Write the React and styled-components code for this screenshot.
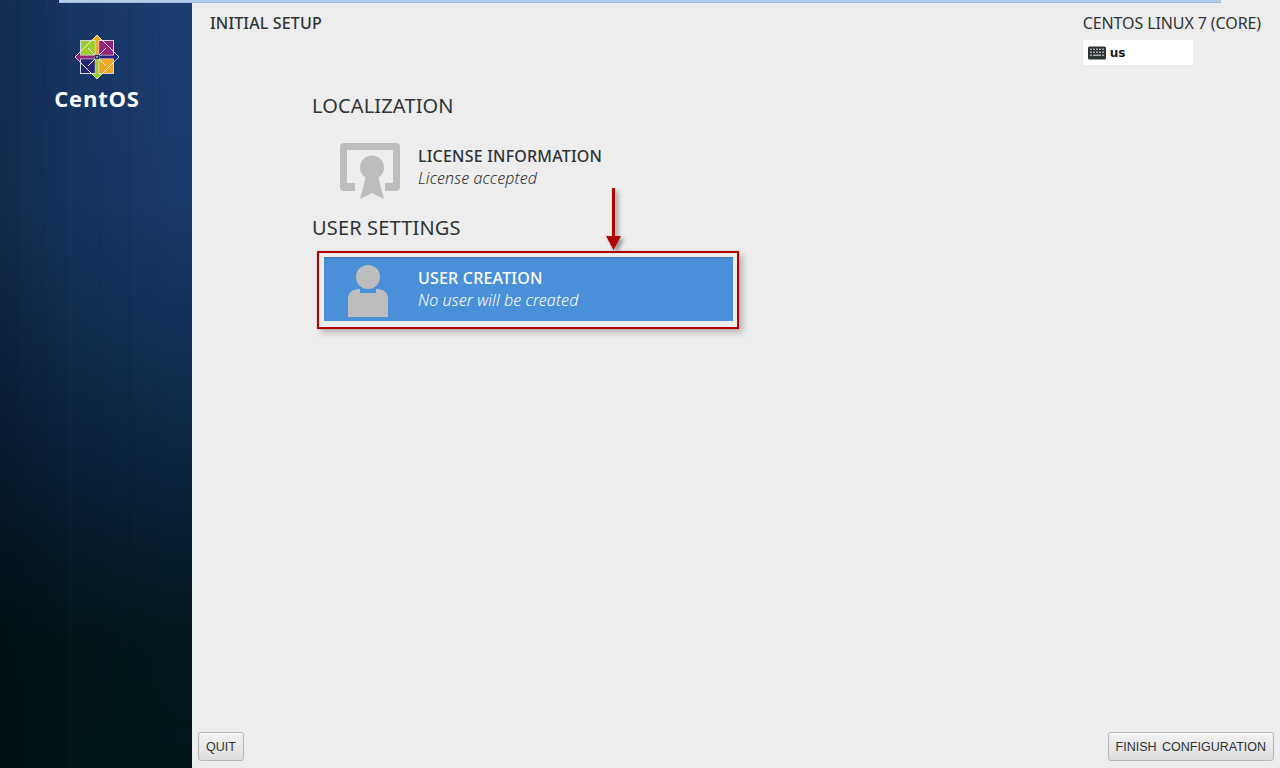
import React from 'react';
import styled, { createGlobalStyle } from 'styled-components';

const Global = createGlobalStyle`
  html, body { margin: 0; padding: 0; height: 100%; background: #ededed; }
  #root { height: 100%; }
  * { box-sizing: border-box; }
`;

const Page = styled.div`
  position: relative;
  display: flex;
  width: 1280px;
  height: 768px;
  overflow: hidden;
  font-family: "Noto Sans", "Open Sans", sans-serif;
  color: #2e3436;
`;

const TopStripe = styled.div`
  position: absolute;
  top: 0;
  left: 59px;
  width: 1162px;
  height: 3px;
  background: #b5cdea;
  border-bottom: 1px solid #9db8da;
`;

const Sidebar = styled.aside`
  flex: 0 0 192px;
  display: flex;
  flex-direction: column;
  align-items: center;
  padding: 34px 0 0 2px;
  background:
    linear-gradient(90deg,
      rgba(0, 0, 0, 0) 0 14px, rgba(0, 0, 0, 0.05) 15px 17px, rgba(0, 0, 0, 0) 18px 41px,
      rgba(0, 0, 0, 0.05) 42px 44px, rgba(0, 0, 0, 0) 45px 68px, rgba(255, 255, 255, 0.012) 69px 72px,
      rgba(0, 0, 0, 0) 73px 98px, rgba(0, 0, 0, 0.05) 99px 100px, rgba(0, 0, 0, 0) 101px 127px,
      rgba(0, 0, 0, 0.04) 128px 131px, rgba(0, 0, 0, 0) 132px 158px, rgba(0, 0, 0, 0.05) 159px 160px,
      rgba(0, 0, 0, 0) 161px),
    linear-gradient(90deg, rgba(0, 0, 0, 0.3), rgba(0, 0, 0, 0.12) 40%, rgba(0, 0, 0, 0) 90%),
    linear-gradient(180deg, #1a3d72 0%, #193a6c 26%, #123058 42%, #0c2542 58%, #071c2c 72%, #03171c 84%, #02171a 100%);
`;

const LogoText = styled.div`
  margin-top: 4px;
  font-family: "Open Sans", sans-serif;
  font-size: 22px;
  font-weight: 700;
  line-height: 28px;
  letter-spacing: 0.8px;
  color: #ffffff;
`;

const Main = styled.main`
  flex: 1;
  display: flex;
  flex-direction: column;
  min-width: 0;
`;

const Header = styled.header`
  display: flex;
  justify-content: space-between;
  align-items: flex-start;
  height: 93px;
  padding: 13px 19px 0 18px;
`;

const Title = styled.h1`
  margin: 0;
  font-size: 16px;
  font-weight: 500;
  line-height: 20px;
  letter-spacing: 0.15px;
`;

const Product = styled.div`
  display: flex;
  flex-direction: column;
  align-items: flex-start;
  gap: 7px;
`;

const ProductName = styled.div`
  font-size: 16px;
  line-height: 20px;
  letter-spacing: -0.1px;
`;

const Layout = styled.div`
  display: flex;
  align-items: center;
  gap: 4px;
  width: 110px;
  height: 25px;
  padding-left: 5px;
  background: #ffffff;
  font-family: "DejaVu Sans", sans-serif;
  font-size: 12px;
  font-weight: 700;
  color: #1a1a1a;
`;

const Content = styled.div`
  flex: 1;
  padding-left: 120px;
`;

const Section = styled.h2`
  margin: 0;
  font-size: 20px;
  font-weight: 400;
  line-height: 26px;
  letter-spacing: 0.15px;
`;

const Spoke = styled.div`
  display: flex;
  align-items: center;
  width: ${p => (p.$selected ? '409px' : '421px')};
  height: 64px;
  padding-left: ${p => (p.$selected ? '24px' : '28px')};
  background: ${p => (p.$selected ? '#4a90d9' : 'transparent')};
  color: ${p => (p.$selected ? '#ffffff' : 'inherit')};
  box-shadow: ${p => (p.$selected ? 'inset 0 2px 2px -1px rgba(60, 90, 130, 0.55)' : 'none')};
`;

const LicenseRow = styled(Spoke)`
  margin: 16px 0;
`;

const IconSlot = styled.div`
  flex: 0 0 ${p => p.$w}px;
  display: flex;
  margin-top: ${p => p.$drop}px;
`;

const SpokeText = styled.div`
  display: flex;
  flex-direction: column;
`;

const SpokeName = styled.div`
  font-size: 16px;
  font-weight: 500;
  line-height: 22px;
  letter-spacing: 0.2px;
`;

const SpokeStatus = styled.div`
  font-size: 16px;
  font-style: italic;
  font-weight: 300;
  line-height: 22px;
  letter-spacing: 0.1px;
`;

const Highlight = styled.div`
  position: relative;
  width: 422px;
  height: 78px;
  margin: 10px 0 0 5px;
  padding: 4px 0 0 5px;
  border: 2px solid #b00000;
  box-shadow: 4px 4px 6px rgba(0, 0, 0, 0.22), 0 0 2px rgba(190, 0, 0, 0.2);
`;

const ArrowMark = styled.svg`
  position: absolute;
  left: 286px;
  top: -65px;
`;

const Footer = styled.footer`
  display: flex;
  justify-content: space-between;
  align-items: flex-end;
  padding: 0 6px 7px;
`;

const Button = styled.button`
  height: 29px;
  padding: 0 7px;
  font-family: "Liberation Sans", "DejaVu Sans", sans-serif;
  font-size: 12.5px;
  word-spacing: ${p => (p.$wide ? '2px' : '0')};
  color: #2e3436;
  background: linear-gradient(180deg, #f2f2f2, #dedede);
  border: 1px solid #b4b4b4;
  border-radius: 3px;
  box-shadow: inset 0 1px 0 #ffffff;
`;

const CentLogo = () => {
  const arrow = '23,1 28.5,6.5 24.8,6.5 24.8,21 21.2,21 21.2,6.5 17.5,6.5';
  return (
    <svg width="46" height="46" viewBox="0 0 46 46" aria-hidden="true">
      <rect x="6" y="6" width="34" height="34" fill="#cfd5dc" />
      <rect x="7" y="7" width="15" height="15" fill="#9ccd2a" />
      <rect x="24" y="7" width="15" height="15" fill="#932279" />
      <rect x="7" y="24" width="15" height="15" fill="#262577" />
      <rect x="24" y="24" width="15" height="15" fill="#efa724" />
      <g fill="none" stroke="#eef1f4" strokeWidth="1">
        <path d="M23 1 L45 23 L23 45 L1 23 Z" />
        <path d="M14 14 L21 21 M32 14 L25 21 M14 32 L21 25 M32 32 L25 25" />
      </g>
      <g stroke="#eef1f4" strokeWidth="0.6">
        <polygon points={arrow} fill="#efa724" />
        <polygon points={arrow} fill="#262577" transform="rotate(90 23 23)" />
        <polygon points={arrow} fill="#9ccd2a" transform="rotate(180 23 23)" />
        <polygon points={arrow} fill="#932279" transform="rotate(270 23 23)" />
      </g>
      <rect x="20.8" y="20.8" width="4.4" height="4.4" fill="#14305a" />
      <rect x="22.2" y="22.2" width="1.6" height="1.6" fill="#cfd5dc" />
    </svg>
  );
};

const KeyboardIcon = () => (
  <svg width="18" height="14" viewBox="0 0 18 14" aria-hidden="true">
    <rect x="0" y="0.5" width="18" height="13" rx="1.5" fill="#2e3436" />
    <g fill="#a8a8a8">
      <path d="M2 2.5h2v1.5H2zM5 2.5h2v1.5H5zM8 2.5h2v1.5H8zM11 2.5h2v1.5h-2zM14 2.5h2v1.5h-2z" />
      <path d="M2 5.5h2v1.5H2zM5 5.5h2v1.5H5zM8 5.5h2v1.5H8zM11 5.5h2v1.5h-2zM14 5.5h2v1.5h-2z" />
      <path d="M2 8.5h2v1.5H2zM14 8.5h2v1.5h-2zM5 8.5h8v1.5H5z" />
    </g>
  </svg>
);

const LicenseIcon = () => (
  <svg width="60" height="56" viewBox="0 0 60 56" aria-hidden="true">
    <path
      fill="#bdbdbd"
      d="M4 0 H56 a4 4 0 0 1 4 4 V44 a4 4 0 0 1 -4 4 H45 V40 H53 V7 H7 V40 H15 V48 H4 a4 4 0 0 1 -4 -4 V4 a4 4 0 0 1 4 -4 Z"
    />
    <circle cx="32" cy="24.5" r="12" fill="#bdbdbd" />
    <path fill="#bdbdbd" d="M26 33 H38 L44 56 L32 50 L20 56 Z" />
  </svg>
);

const UserIcon = () => (
  <svg width="40" height="52" viewBox="0 0 40 52" aria-hidden="true">
    <circle cx="20" cy="12" r="12" fill="#bdbdbd" />
    <path fill="#bdbdbd" d="M0 52 V34 Q0 24 12 24 V28 H28 V24 Q40 24 40 34 V52 Z" />
  </svg>
);

export default function App() {
  return (
    <Page>
      <Global />
      <TopStripe />
      <Sidebar>
        <CentLogo />
        <LogoText>CentOS</LogoText>
      </Sidebar>
      <Main>
        <Header>
          <Title>INITIAL SETUP</Title>
          <Product>
            <ProductName>CENTOS LINUX 7 (CORE)</ProductName>
            <Layout>
              <KeyboardIcon />
              us
            </Layout>
          </Product>
        </Header>
        <Content>
          <Section>LOCALIZATION</Section>
          <LicenseRow>
            <IconSlot $w={78} $drop={8}>
              <LicenseIcon />
            </IconSlot>
            <SpokeText>
              <SpokeName>LICENSE INFORMATION</SpokeName>
              <SpokeStatus>License accepted</SpokeStatus>
            </SpokeText>
          </LicenseRow>
          <Section>USER SETTINGS</Section>
          <Highlight>
            <ArrowMark width="24" height="66" viewBox="0 0 24 66" aria-hidden="true">
              <defs>
                <filter id="arrowShadow" x="-50%" y="-20%" width="220%" height="140%">
                  <feDropShadow dx="3" dy="3" stdDeviation="2" floodColor="#000" floodOpacity="0.4" />
                </filter>
              </defs>
              <path
                fill="#b00000"
                filter="url(#arrowShadow)"
                d="M7 0 H10 V48 H16 L8.5 62 L1 48 H7 Z"
              />
            </ArrowMark>
            <Spoke $selected>
              <IconSlot $w={70} $drop={4}>
                <UserIcon />
              </IconSlot>
              <SpokeText>
                <SpokeName>USER CREATION</SpokeName>
                <SpokeStatus>No user will be created</SpokeStatus>
              </SpokeText>
            </Spoke>
          </Highlight>
        </Content>
        <Footer>
          <Button>QUIT</Button>
          <Button $wide>FINISH CONFIGURATION</Button>
        </Footer>
      </Main>
    </Page>
  );
}
